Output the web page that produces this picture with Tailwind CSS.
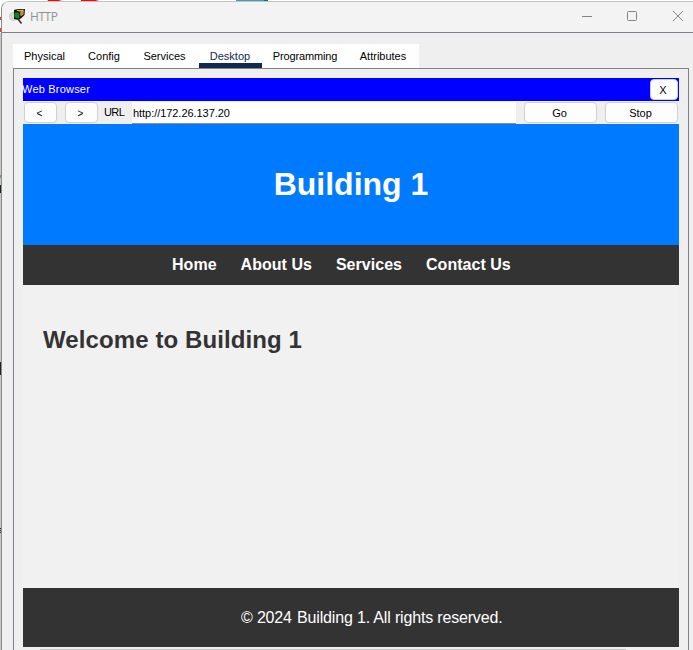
<!DOCTYPE html>
<html lang="en">
<head>
<meta charset="utf-8">
<title>HTTP</title>
<script src="https://cdn.jsdelivr.net/npm/@tailwindcss/browser@4"></script>
</head>
<body class="relative h-[650px] w-[693px] overflow-hidden bg-white font-['Liberation_Sans',Arial,sans-serif] text-[11px] leading-none text-black">
<!-- Workspace behind the window -->
<svg class="absolute inset-0" width="693" height="650" viewBox="0 0 693 650">
  <path d="M0 0h693v12H0z" fill="#fff"/>
  <path d="M0 33h1v617H0z" fill="#c6c6c6"/>
  <path d="M48 1.500C52 .5 57 0 62-1.500M81 1.500C87 1 94 0 99-1.500" stroke="#f00" stroke-width="3" fill="none"/>
  <path d="M0 17h1v3H0zM0 28h1v4H0z" fill="#f33"/>
  <path d="M236 0h32v2h-32z" fill="#4599b2"/><path d="M264 0h4v2h-4z" fill="#087192"/>
  <path d="M0 175h1v3H0z" fill="#70a85b"/><path d="M0 185h1v8H0zM0 362h1v13H0zM0 528h1v1H0zM0 530h1v1H0zM0 532h1v1H0z" fill="#222"/>
</svg>
<div class="relative ml-px mt-px flex h-[660px] w-[700px] flex-col overflow-hidden rounded-tl-[8px] border-l border-t border-l-[#8b8b8b] border-t-[#c3c3c3] bg-[#efefef]">
  <header class="flex h-[31px] w-[692px] shrink-0 items-center border-b border-[#7e828c] bg-[#f3f3f3]">
    <svg class="mb-px ml-[7px]" width="18" height="18" viewBox="0 0 18 18">
      <circle cx="4.500" cy="8.500" r="4" fill="#d5dad7" stroke="#c0c5c2" stroke-width=".7"/>
      <path d="M5 2l3-1 8 0-.5 6-3 3-3 2-4.500-1z" fill="#14190c"/>
      <path d="M7 1.500l4 .5 4-.5-1.500 2.500-5-1z" fill="#e8b652"/>
      <path d="M11 4.500l4-2-.5 4-3 2z" fill="#c98f30"/>
      <path d="M6 4.500l3 0 1.500 2-.5 4-3-.5-2-2z" fill="#158323"/>
      <path d="M9 11l3.500 4.500" stroke="#333" stroke-width="1.600"/>
    </svg>
    <span class="ml-[3px] font-['Open_Sans',sans-serif] text-[12px] tracking-[-0.45px] text-[#929292]">HTTP</span>
    <svg class="mb-[3px] ml-auto mr-[9px]" width="104" height="14" viewBox="0 0 104 14" fill="none" stroke="#858585">
      <path d="M1 7.500h10"/><rect x="46.500" y="2.500" width="9" height="9" rx="1"/><path d="M92 2l10 10M102 2L92 12"/>
    </svg>
  </header>
  <nav class="ml-[11px] mt-[11px] flex h-[24px] w-[406px] shrink-0 bg-white text-center leading-[25px]">
    <span class="w-[63px]">Physical</span>
    <span class="w-[56px]">Config</span>
    <span class="w-[67px] pr-[2px]">Services</span>
    <span class="w-[63px] border-b-[5px] border-[#0f2a52] pr-px text-[#0f2a52]">Desktop</span>
    <span class="w-[86px] tracking-[-0.150px]">Programming</span>
    <span class="w-[71px] pr-px">Attributes</span>
  </nav>
  <section class="ml-[11px] h-[600px] w-[676px] shrink-0 border border-[#7e828c] px-[9px] pt-[9px]">
    <div class="w-[656px]">
      <div class="flex h-[23px] items-center justify-between bg-[#0000ff] pr-px text-white">
        <span class="-ml-px tracking-[0.200px]">Web Browser</span>
        <button class="h-[21px] w-[28px] rounded-[4px] border border-[#d0d0d0] bg-[#fdfdfd] pr-[2px] pt-px text-black">X</button>
      </div>
      <div class="flex h-[23px] items-center px-px">
        <button class="h-[21px] w-[33px] rounded-[4px] border border-[#d0d0d0] bg-[#fdfdfd] pr-[2px] pt-[2px] text-[10px]">&lt;</button>
        <button class="ml-[8px] h-[21px] w-[33px] rounded-[4px] border border-[#d0d0d0] bg-[#fdfdfd] pr-[2px] pt-[2px] text-[10px]">&gt;</button>
        <span class="ml-[6px] w-[28px] pb-px tracking-[-0.600px]">URL</span>
        <span class="h-[22px] w-[384px] self-end border-b border-[#8c8c8c] bg-white pl-px leading-[22px] tracking-[-0.050px]">http://172.26.137.20</span>
        <button class="ml-[8px] h-[21px] w-[73px] rounded-[4px] border border-[#d0d0d0] bg-[#fdfdfd] pr-[2px] pt-px">Go</button>
        <button class="ml-[8px] h-[21px] w-[73px] rounded-[4px] border border-[#d0d0d0] bg-[#fdfdfd] pr-[2px] pt-px">Stop</button>
      </div>
      <h1 class="h-[121px] bg-[#007bff] text-center text-[32px] font-bold leading-[120px] text-white">Building 1</h1>
      <div class="flex h-[40px] gap-[24px] bg-[#333] pl-[149px] text-[16px] font-bold leading-[39px] tracking-[0.030px] text-white">
        <span>Home</span><span>About Us</span><span>Services</span><span>Contact Us</span>
      </div>
      <main class="h-[303px] bg-[#f1f1f1] pl-[20px] pt-[40px]">
        <h2 class="text-[24px] font-bold leading-[30px] tracking-[0.100px] text-[#333]">Welcome to Building 1</h2>
      </main>
      <footer class="h-[59px] bg-[#333] pl-[218px] text-[16px] leading-[59px] tracking-[-0.170px] text-white"><span class="mr-[1px]">© 2024</span> Building 1. All rights reserved.</footer>
      <div class="ml-[17px] mt-[2px] h-[12px] w-[586px] bg-[#c1c1c1]"></div>
    </div>
  </section>
</div>
</body>
</html>
